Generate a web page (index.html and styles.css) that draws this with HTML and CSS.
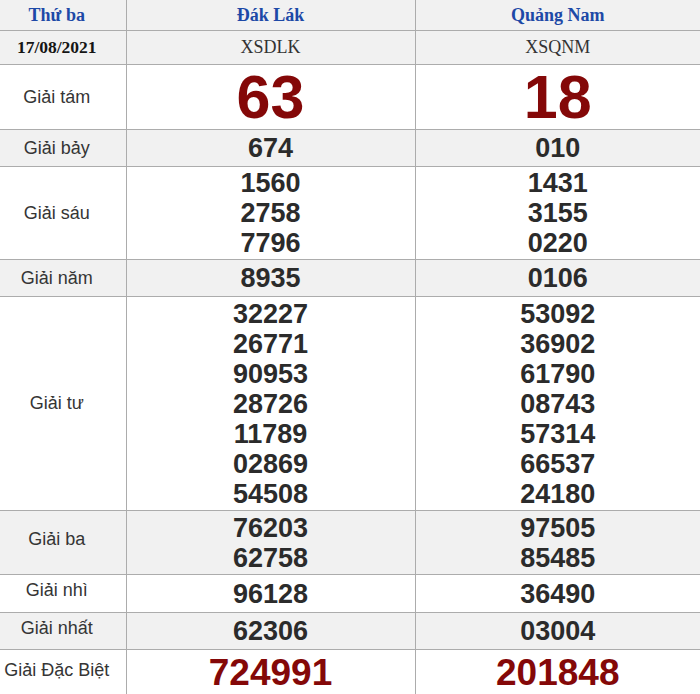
FILE: index.html
```html
<!DOCTYPE html>
<html lang="vi">
<head>
<meta charset="utf-8">
<link rel="stylesheet" href="styles.css">
</head>
<body>
<table class="kq">
  <colgroup><col class="c1"><col class="c2"><col class="c3"></colgroup>
  <tr class="r-head gray">
    <td class="day">Thứ ba</td>
    <td class="prov">Đák Lák</td>
    <td class="prov">Quảng Nam</td>
  </tr>
  <tr class="r-code gray">
    <td class="date">17/08/2021</td>
    <td class="code">XSDLK</td>
    <td class="code">XSQNM</td>
  </tr>
  <tr class="r-g8">
    <td class="lbl">Giải tám</td>
    <td class="big">63</td>
    <td class="big">18</td>
  </tr>
  <tr class="r-1 gray">
    <td class="lbl">Giải bảy</td>
    <td class="num">674</td>
    <td class="num">010</td>
  </tr>
  <tr class="r-3">
    <td class="lbl">Giải sáu</td>
    <td class="num">1560<br>2758<br>7796</td>
    <td class="num">1431<br>3155<br>0220</td>
  </tr>
  <tr class="r-1 gray">
    <td class="lbl">Giải năm</td>
    <td class="num">8935</td>
    <td class="num">0106</td>
  </tr>
  <tr class="r-7">
    <td class="lbl">Giải tư</td>
    <td class="num">32227<br>26771<br>90953<br>28726<br>11789<br>02869<br>54508</td>
    <td class="num">53092<br>36902<br>61790<br>08743<br>57314<br>66537<br>24180</td>
  </tr>
  <tr class="r-2 gray">
    <td class="lbl lift">Giải ba</td>
    <td class="num">76203<br>62758</td>
    <td class="num">97505<br>85485</td>
  </tr>
  <tr class="r-nhi">
    <td class="lbl lift">Giải nhì</td>
    <td class="num">96128</td>
    <td class="num">36490</td>
  </tr>
  <tr class="r-1 gray">
    <td class="lbl lift">Giải nhất</td>
    <td class="num">62306</td>
    <td class="num">03004</td>
  </tr>
  <tr class="r-db">
    <td class="lbl lift">Giải Đặc Biệt</td>
    <td class="db">724991</td>
    <td class="db">201848</td>
  </tr>
</table>
</body>
</html>
```
FILE: styles.css
```css
html, body {
  margin: 0;
  padding: 0;
  background: #ffffff;
}
body {
  width: 700px;
  height: 694px;
  overflow: hidden;
}
.kq {
  width: 700px;
  border-collapse: collapse;
  table-layout: fixed;
  font-family: "Liberation Sans", Arial, sans-serif;
  color: #2a2a2a;
}
.c1 { width: 126px; }
.c2 { width: 289px; }
.c3 { width: 285px; }
.kq td {
  padding: 0;
  text-align: center;
  vertical-align: middle;
  border-top: 1px solid #acacac;
  border-bottom: 1px solid #acacac;
  border-left: 1px solid #acacac;
}
.kq td:first-child {
  border-left: none;
  padding-right: 12px;
}
.kq tr:first-child td { border-top: none; }
.gray td { background: #f1f1f1; }

.r-head td { height: 30px; }
.r-code td { height: 33px; }
.r-g8 td { height: 64px; }
.r-1 td { height: 36px; }
.r-nhi td { height: 37px; }
.r-3 td { height: 92px; }
.r-7 td { height: 213px; }
.r-2 td { height: 63px; }
.r-db td { height: 46px; }

.day, .prov {
  font-family: "Liberation Serif", "Times New Roman", serif;
  font-weight: bold;
  font-size: 18px;
  color: #1d49a7;
}
.date {
  font-family: "Liberation Serif", "Times New Roman", serif;
  font-weight: bold;
  font-size: 17.5px;
  color: #151515;
}
.code {
  font-family: "Liberation Serif", "Times New Roman", serif;
  font-size: 18px;
  color: #333333;
}
.lbl {
  font-size: 18px;
  color: #353535;
}
.kq tr td.lift {
  padding-bottom: 6px;
  height: auto;
}
.num {
  font-weight: bold;
  font-size: 27px;
  line-height: 30px;
  color: #2b2b2b;
}
.big {
  font-weight: bold;
  font-size: 61px;
  line-height: 60px;
  color: #840808;
}
.db {
  font-weight: bold;
  font-size: 37px;
  line-height: 42px;
  color: #840808;
  vertical-align: top;
}
```
